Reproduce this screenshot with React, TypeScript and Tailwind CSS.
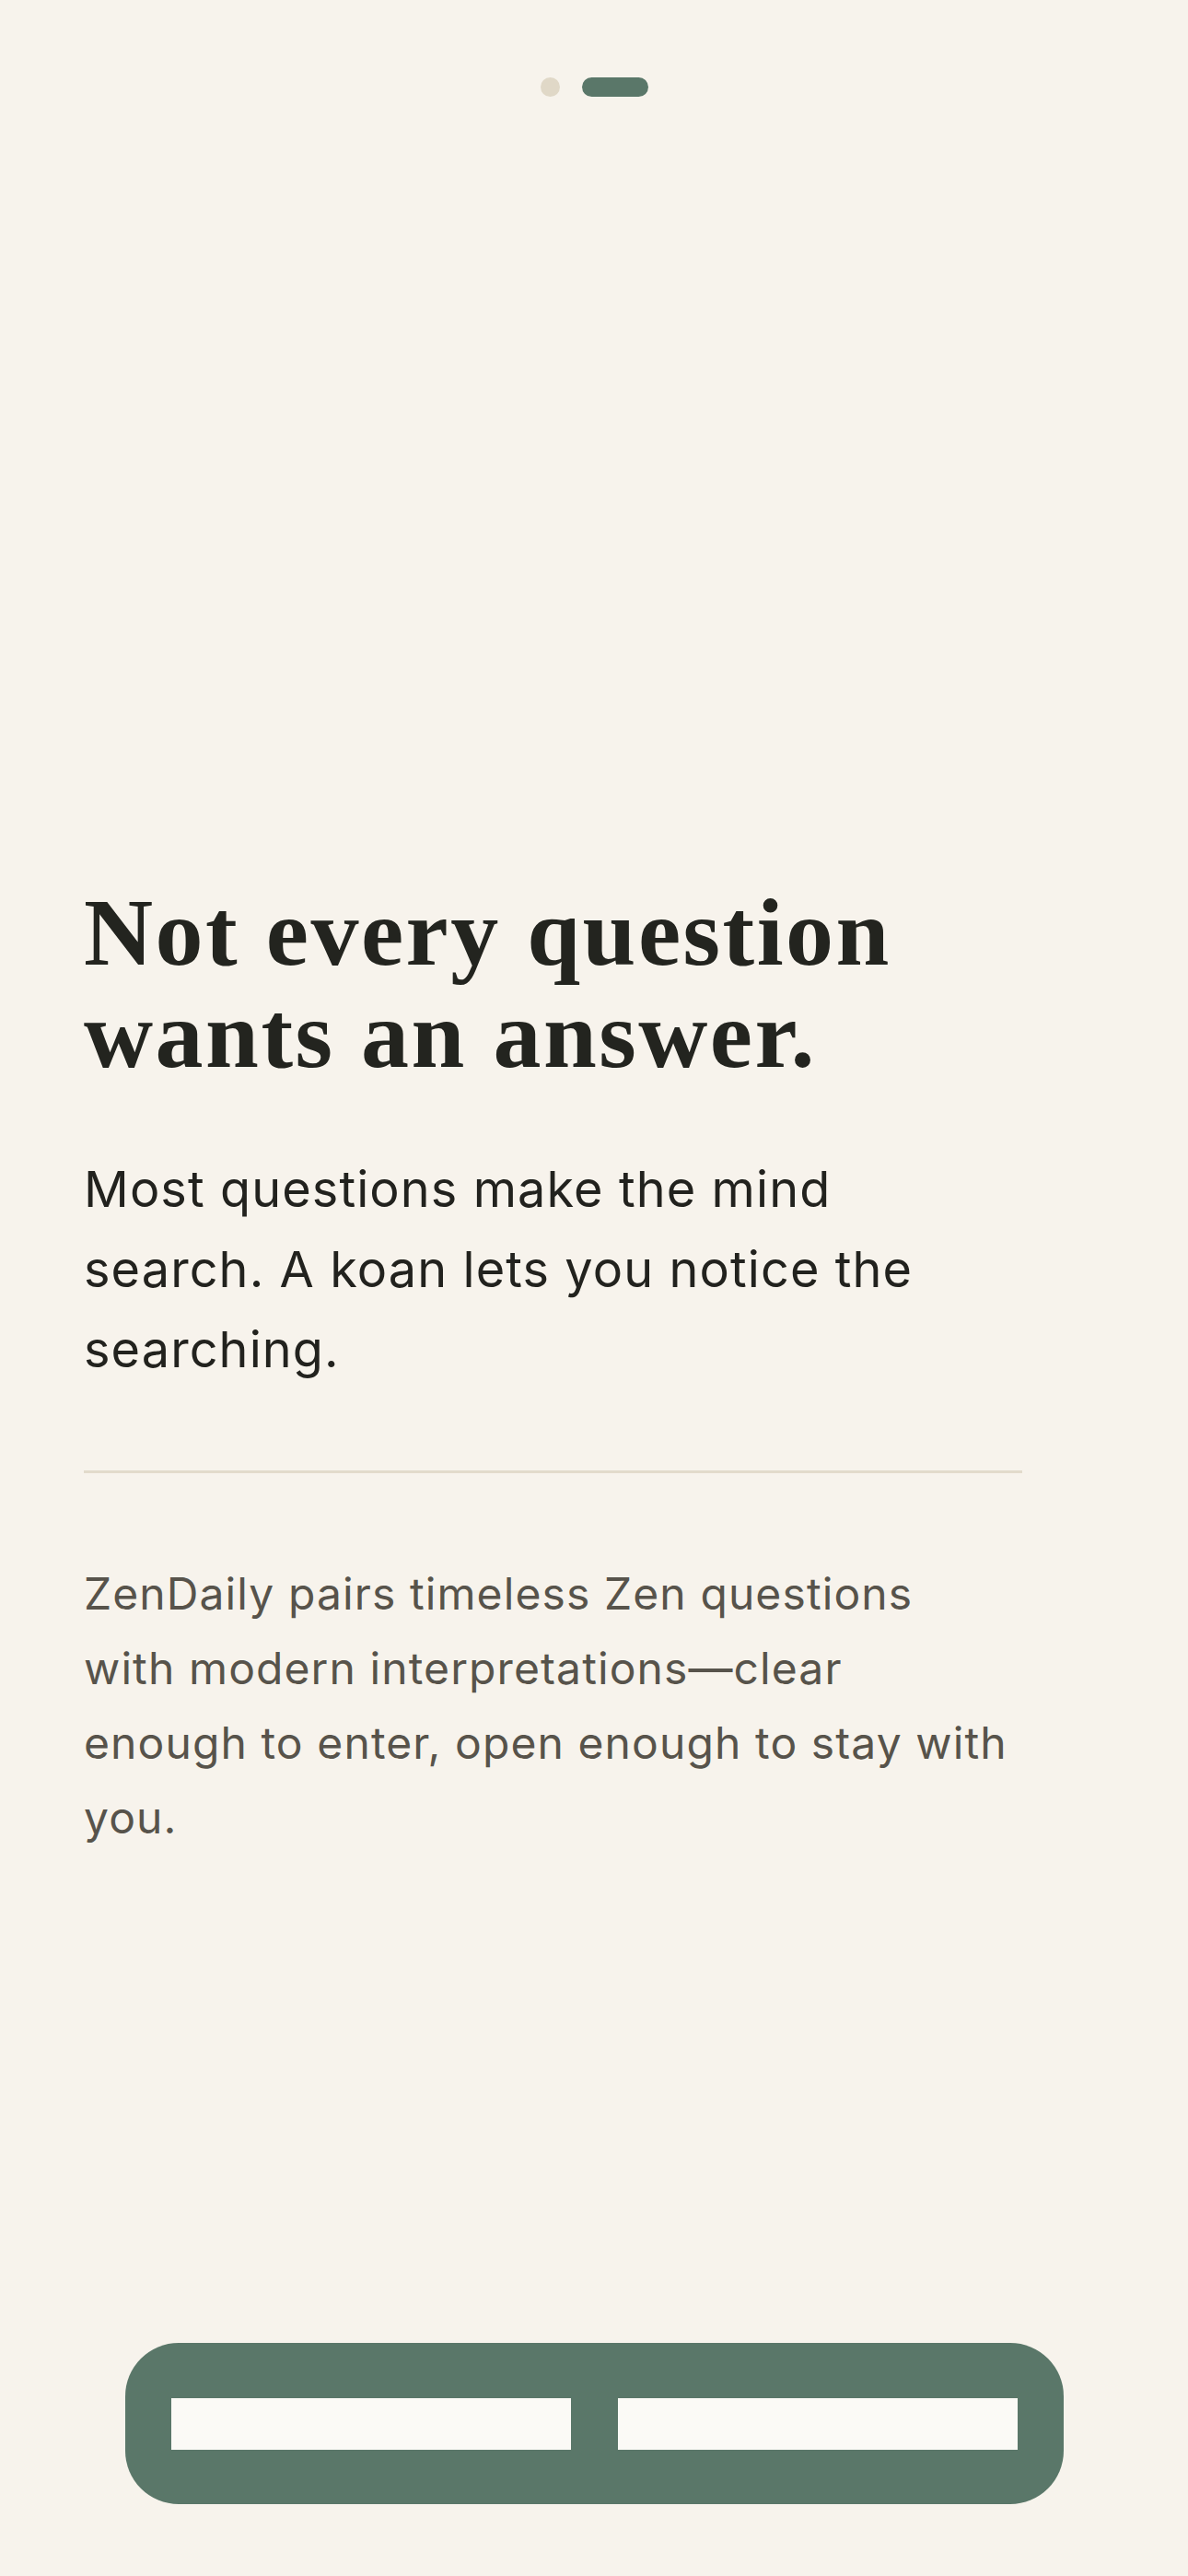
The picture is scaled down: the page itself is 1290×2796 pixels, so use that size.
import React from 'react';

// ── Onboarding step 2 ─────────────────────────────────────────
const Dots: React.FC<{ active: number; count: number }> = ({ active, count }) => (
  <div className="flex items-center justify-center gap-[24px]">
    {Array.from({ length: count }).map((_, i) =>
      i === active ? (
        <span key={i} className="block h-[21px] w-[72px] rounded-full bg-[#5a7769]" />
      ) : (
        <span key={i} className="block h-[21px] w-[21px] rounded-full bg-[#e0d8c7]" />
      )
    )}
  </div>
);

const App: React.FC = () => {
  return (
    <div
      className="flex h-[2796px] w-[1290px] flex-col bg-[#f7f3ec]"
      style={{ fontFamily: 'Inter, "Noto Sans", sans-serif' }}
    >
      <div className="pt-[84px]">
        <Dots active={1} count={2} />
      </div>

      <div className="mt-[851px] px-[91px]">
        <div className="max-w-[1019px]">
          <h1 className="font-['Liberation_Serif',serif] text-[104px] font-bold leading-[111px] tracking-[2.5px] text-[#23241f]">
            Not every question wants an answer.
          </h1>
          <p className="mt-[69px] max-w-[950px] text-[54px] leading-[87px] tracking-[1.1px] text-[#22221e]">
            Most questions make the mind search. A koan lets you notice the searching.
          </p>
          <div className="mt-[88px] h-[3px] w-full bg-[#e2dbcb]" />
          {/* line breaks pinned to match the design's wrap */}
          <p className="mt-[90px] text-[48px] leading-[81px] tracking-[1.1px] text-[#57534b]">
            ZenDaily pairs timeless Zen questions
            <br />
            with modern interpretations—clear
            <br />
            enough to enter, open enough to stay with
            <br />
            you.
          </p>
        </div>
      </div>

      <div className="flex-1" />

      <div className="flex justify-center pb-[78px]">
        <button className="flex h-[175px] w-[1019px] items-center justify-between rounded-[58px] bg-[#5a7769] px-[50px]">
          <span className="block h-[56px] w-[434px] bg-[#fbfaf6]" />
          <span className="block h-[56px] w-[434px] bg-[#fbfaf6]" />
        </button>
      </div>
    </div>
  );
};

export default App;
